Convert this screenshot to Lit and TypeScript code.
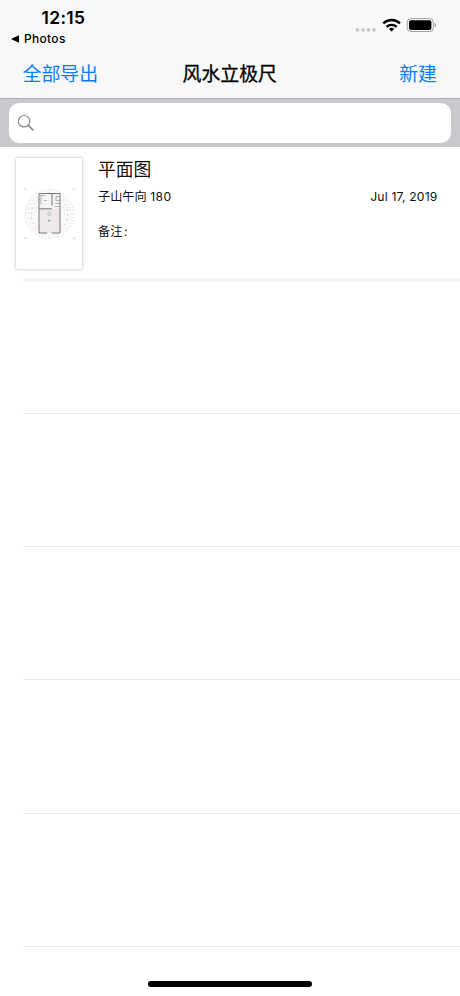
import { LitElement, html, css, svg } from "lit";
import { customElement, property } from "lit/decorators.js";

const FONT = css`Inter, "Noto Sans CJK SC", sans-serif`;

@customElement("status-bar")
class StatusBar extends LitElement {
  static styles = css`
    :host { display: flex; justify-content: space-between; height: 50px; font-family: ${FONT}; color: #000; }
    .left { display: flex; flex-direction: column; padding-left: 11px; }
    .time { font-size: 17.4px; line-height: 20px; font-weight: 600; padding: 8px 0 0 30.5px; letter-spacing: 0.35px; }
    .back { display: flex; align-items: center; gap: 5px; font-size: 12px; line-height: 16px; margin-top: 3px; font-weight: 450; letter-spacing: 0.3px; }
    .icons { width: 84px; height: 20px; margin: 15px 22px 0 0; }
  `;
  render() {
    return html`
      <div class="left">
        <div class="time">12:15</div>
        <div class="back">
          <svg width="8" height="8" viewBox="0 0 8 8"><path d="M0 4 8 .2v7.6z" /></svg>
          <span>Photos</span>
        </div>
      </div>
      <svg class="icons" viewBox="0 0 84 20">
        <g fill="#c9c9cb">
          ${[3.3, 9, 14.5, 20].map((x) => svg`<circle cx=${x} cy="14.8" r="1.9" />`)}
        </g>
        <g fill="none" stroke="#000" stroke-width="2.4">
          <path d="M29.3 8.3a12.2 12.2 0 0 1 16.6 0" />
          <path d="M32.5 11.9a7.4 7.4 0 0 1 10.2 0" />
        </g>
        <path d="M37.6 16.6 34.9 13.9a4 4 0 0 1 5.4 0z" />
        <rect x="53.2" y="3.6" width="26.2" height="12.9" rx="3.8" fill="none" stroke="#a0a0a2" />
        <rect x="55" y="5.2" width="22.4" height="9.7" rx="2" />
        <path d="M80.6 7.9q1.6.5 1.6 2.1t-1.6 2.1z" fill="#a0a0a2" />
      </svg>
    `;
  }
}

@customElement("nav-bar")
class NavBar extends LitElement {
  @property() heading = "";
  static styles = css`
    :host { display: grid; grid-template-columns: 1fr auto 1fr; align-items: center; height: 49px; padding: 0 23px 0 22.5px; font: 18.9px/28px ${FONT}; }
    .action { color: #0a7cf8; }
    .end { text-align: right; }
    .title { color: #000; -webkit-text-stroke: 0.3px #000; }
  `;
  render() {
    return html`
      <span class="action">全部导出</span>
      <span class="title">${this.heading}</span>
      <span class="action end">新建</span>
    `;
  }
}

@customElement("search-bar")
class SearchBar extends LitElement {
  static styles = css`
    :host { display: block; box-sizing: border-box; height: 49px; padding: 3.5px 9px 4.5px; background: #c9c9cd; border-top: 1px solid #b0b0b3; }
    .field { display: flex; align-items: center; height: 40px; padding-left: 8px; border-radius: 10px; background: #fff; }
  `;
  render() {
    return html`
      <div class="field">
        <svg width="18" height="18" viewBox="0 0 18 18" fill="none" stroke="#8b8b90">
          <circle cx="7.1" cy="7.2" r="5.7" stroke-width="1.2" />
          <path d="m11.3 11.4 5 4.9" stroke-width="1.7" />
        </svg>
      </div>
    `;
  }
}

@customElement("plan-thumbnail")
class PlanThumbnail extends LitElement {
  static styles = css`
    :host { display: block; width: 66px; height: 111px; background: #fff; box-shadow: 0 0 3px rgba(0, 0, 0, 0.3); }
    svg { display: block; }
  `;
  render() {
    return html`
      <svg width="66" height="111" viewBox="0 -4.5 66 111" fill="none">
        <circle cx="33.5" cy="51.5" r="24" fill="#fbfafa" />
        <g stroke="#aaa3a5" stroke-width=".8">
          <circle cx="33.5" cy="51.5" r="24.3" stroke-dasharray=".8 2.4" opacity=".85" />
          <circle cx="33.5" cy="51.5" r="21.5" stroke-dasharray=".8 4" opacity=".7" />
          <circle cx="33.5" cy="51.5" r="18.3" stroke-dasharray="1.4 3.8" />
          <circle cx="33.5" cy="51.5" r="15" stroke-dasharray=".7 2.5" opacity=".45" />
        </g>
        <path d="M9 45h49M33.5 27v49M16 34l35 35M51 34 16 69" stroke="#eeebec" stroke-width=".6" />
        <path d="M23 46h21v24H23z" fill="#eee8e9" />
        <path d="M23 31h21v15H23z" fill="#f5f3f4" />
        <path d="M31 70.5h-8V31h21v39.5h-8M23 46.3h13M36 31v12" stroke="#77777b" />
        <path d="M24 33h5M25 33v9M28 38h3M43 34h-3v4h4M39 41h5M39 44h5" stroke="#929295" stroke-width=".7" />
        <circle cx="33.2" cy="51.2" r="1.6" stroke="#b3a0a4" stroke-width=".7" />
        <path d="M33 57.2v2.2M32 58.2h2.3" stroke="#968a8e" stroke-width=".8" />
        <path d="M8.5 26h1v1h-1zM57.5 26h1v1h-1zM8.5 75.3h1v1h-1zM57.5 75.3h1v1h-1z" fill="#999" />
      </svg>
    `;
  }
}

@customElement("record-row")
class RecordRow extends LitElement {
  static styles = css`
    :host { display: flex; box-sizing: border-box; height: 100%; padding: 11px 22.5px 0 16px; gap: 16px; font-family: ${FONT}; color: #111; }
    .info { flex: 1; display: flex; flex-direction: column; }
    .name { font-size: 17.8px; line-height: 24px; }
    .meta { display: flex; justify-content: space-between; font-size: 12.2px; line-height: 18px; margin-top: 6px; }
    .num { letter-spacing: 0.45px; }
    .date { letter-spacing: 0.15px; }
    .note { font-size: 12.2px; line-height: 18px; margin-top: 17px; }
    .colon { margin-left: 1.5px; }
  `;
  render() {
    return html`
      <plan-thumbnail></plan-thumbnail>
      <div class="info">
        <div class="name">平面图</div>
        <div class="meta"><span>子山午向 <span class="num">180</span></span><span class="date">Jul 17, 2019</span></div>
        <div class="note">备注<span class="colon">:</span></div>
      </div>
    `;
  }
}

@customElement("app-root")
class AppRoot extends LitElement {
  static styles = css`
    :host { display: flex; flex-direction: column; position: relative; width: 460px; height: 996px; overflow: hidden; background: #fff; }
    header { background: #f8f8f8; height: 98px; }
    .list { display: grid; grid-template-rows: repeat(6, 133.35px); }
    .cell { display: flex; flex-direction: column; }
    .content { flex: 1; min-height: 0; }
    .line { height: 1px; margin-left: 23px; background: #e9e9eb; }
    .cell:first-child .line { height: 2px; margin-bottom: -1px; background: #f2f2f3; }
    .home { position: absolute; left: 148px; bottom: 9px; width: 164px; height: 6px; border-radius: 3px; background: #000; }
  `;
  render() {
    return html`
      <header>
        <status-bar></status-bar>
        <nav-bar heading="风水立极尺"></nav-bar>
      </header>
      <search-bar></search-bar>
      <div class="list">
        ${[0, 1, 2, 3, 4, 5].map(
          (i) => html`<div class="cell">
            <div class="content">${i === 0 ? html`<record-row></record-row>` : ""}</div>
            <div class="line"></div>
          </div>`
        )}
      </div>
      <div class="home"></div>
    `;
  }
}
